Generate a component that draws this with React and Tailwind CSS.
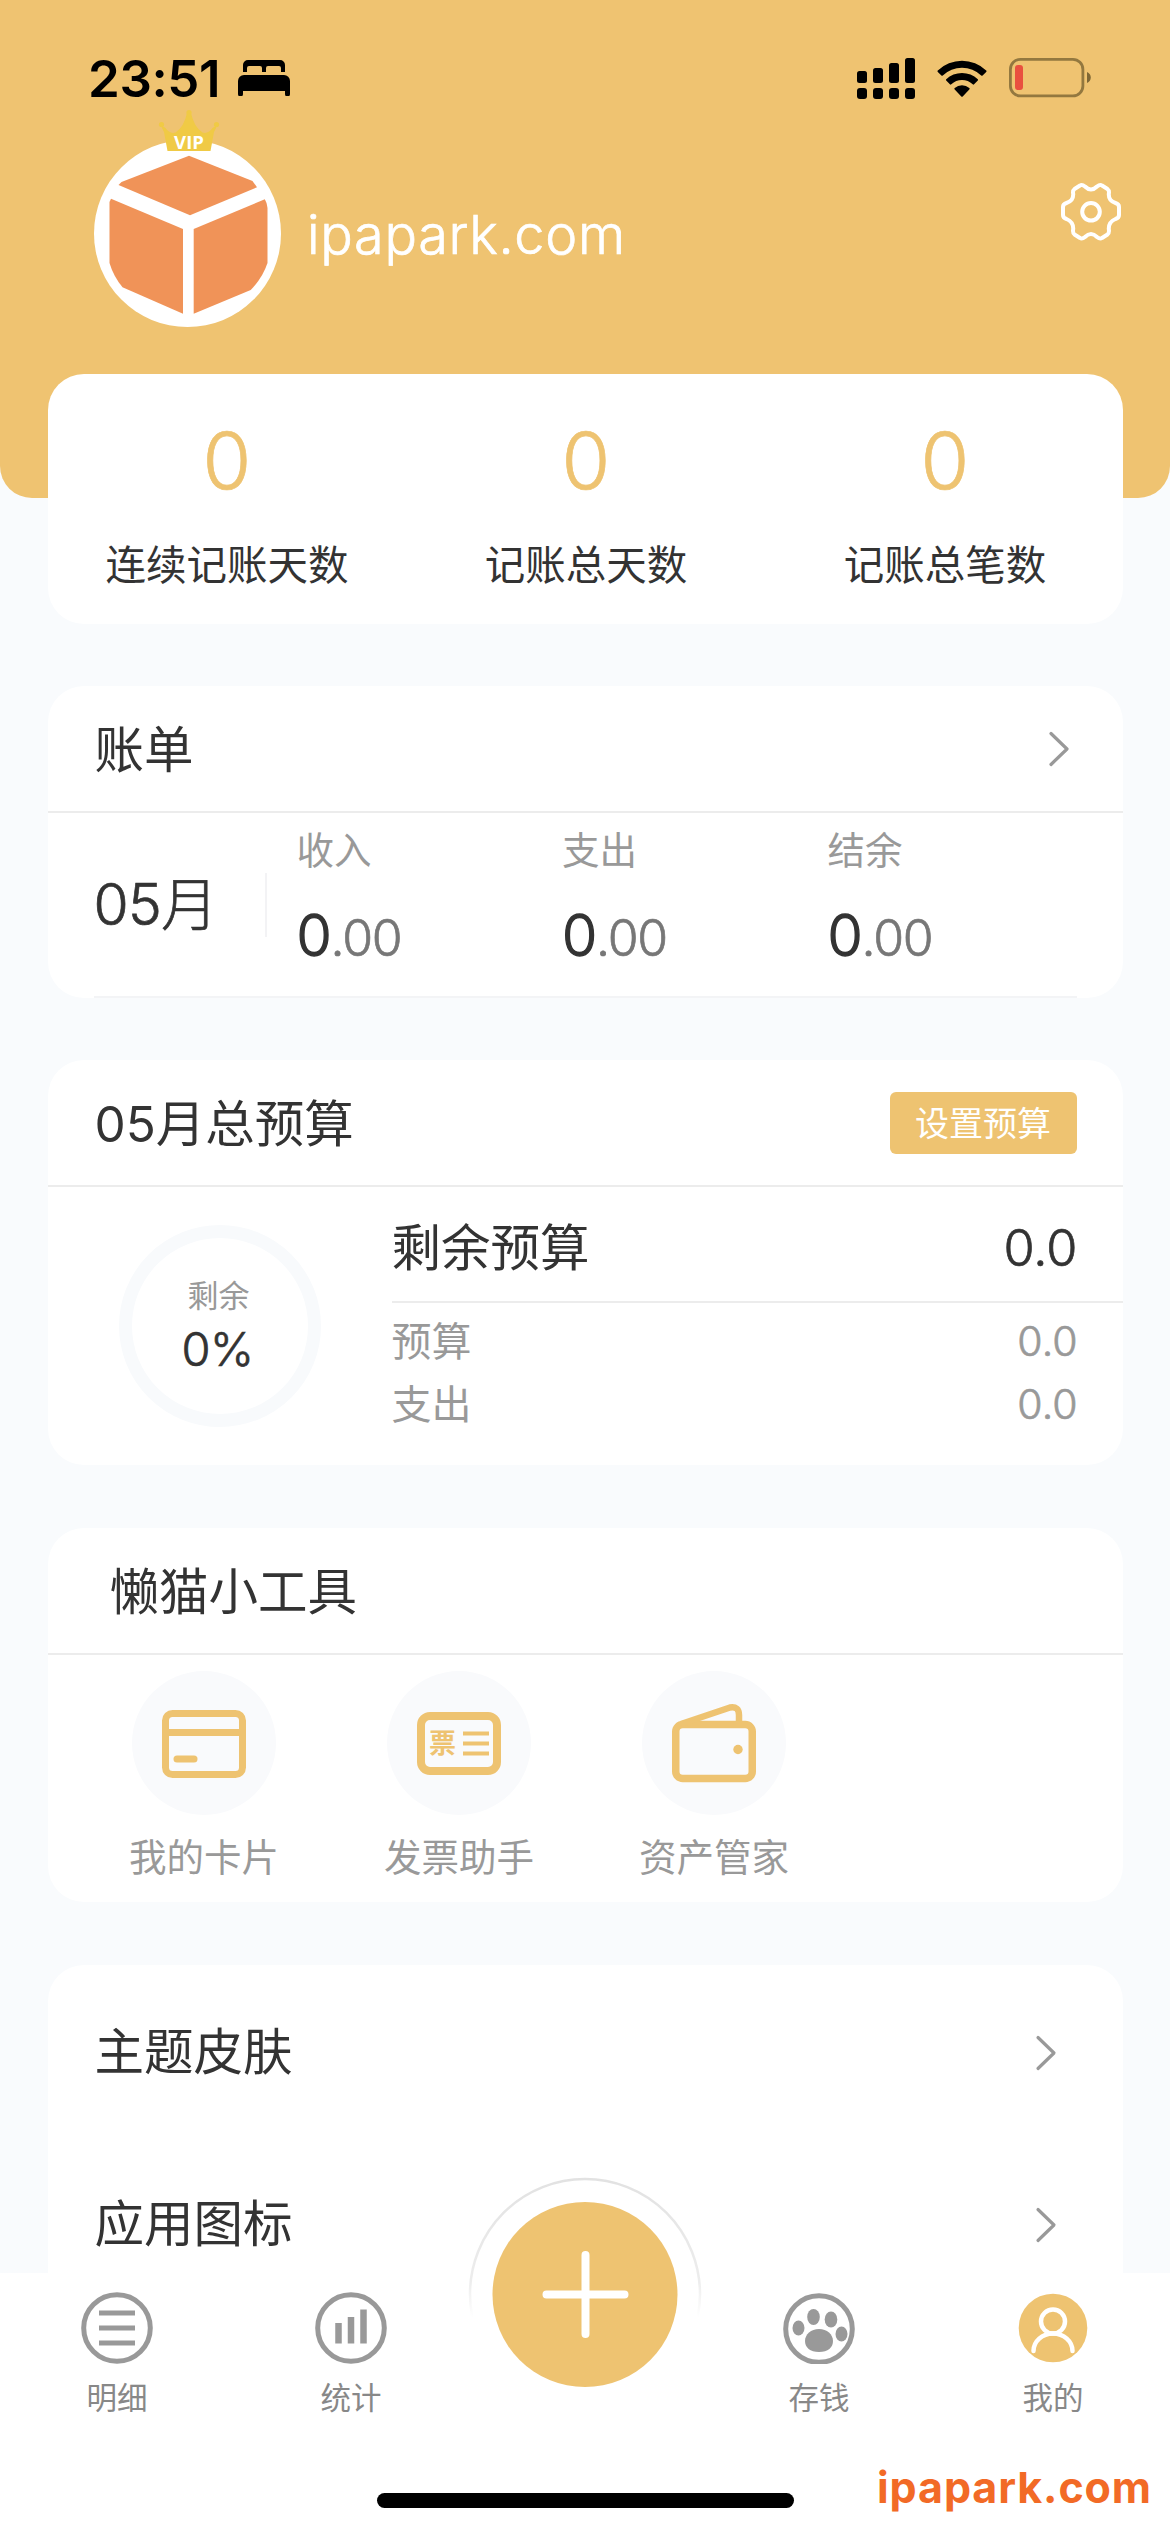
const FONT = "font-['Inter','Noto_Sans_CJK_SC',sans-serif]"

const STATS = [
  { label: '连续记账天数', value: 0 },
  { label: '记账总天数', value: 0 },
  { label: '记账总笔数', value: 0 },
]

const BILL = ['收入', '支出', '结余']

const TOOLS = [
  { label: '我的卡片', icon: CardIcon },
  { label: '发票助手', icon: InvoiceIcon },
  { label: '资产管家', icon: WalletIcon },
]

const MENU = ['主题皮肤', '应用图标']

function BedIcon() {
  return (
    <svg width="52" height="36" viewBox="0 0 52 36">
      <path d="M5 12V5a5 5 0 0 1 5-5h32a5 5 0 0 1 5 5v7h-4V8a2 2 0 0 0-2-2H30a2 2 0 0 0-2 2v4h-4V8a2 2 0 0 0-2-2H11a2 2 0 0 0-2 2v4z" />
      <path d="M0 21a6 6 0 0 1 6-6h40a6 6 0 0 1 6 6v13a2 2 0 0 1-5 0v-3H5v3a2 2 0 0 1-5 0z" />
    </svg>
  )
}

function SignalIcon() {
  return (
    <svg width="58" height="41" viewBox="0 0 58 41">
      <rect x="0" y="13" width="10" height="12" rx="2.5" />
      <rect x="16" y="10" width="10" height="15" rx="2.5" />
      <rect x="32" y="5" width="10" height="20" rx="2.5" />
      <rect x="48" y="0" width="10" height="25" rx="2.5" />
      <rect x="0" y="30" width="10" height="11" rx="3" />
      <rect x="16" y="30" width="10" height="11" rx="3" />
      <rect x="32" y="30" width="10" height="11" rx="3" />
      <rect x="48" y="30" width="10" height="11" rx="3" />
    </svg>
  )
}

function WifiIcon() {
  return (
    <svg width="50" height="37" viewBox="0 0 50 37">
      <path d="M0.8 10.5a35 35 0 0 1 48.4 0a1 1 0 0 1 0 1.400l-3.600 3.600a1 1 0 0 1-1.400 0a27.800 27.800 0 0 0-38.400 0a1 1 0 0 1-1.400 0l-3.600-3.600a1 1 0 0 1 0-1.400z" />
      <path d="M9.200 19.200a23 23 0 0 1 31.600 0a1 1 0 0 1 0 1.400l-3.700 3.700a1 1 0 0 1-1.400 0a15.600 15.600 0 0 0-21.400 0a1 1 0 0 1-1.400 0l-3.700-3.700a1 1 0 0 1 0-1.400z" />
      <path d="M17.700 28a11 11 0 0 1 14.600 0a1 1 0 0 1 0 1.400l-6.600 7a1 1 0 0 1-1.400 0l-6.600-7a1 1 0 0 1 0-1.400z" />
    </svg>
  )
}

function BatteryIcon() {
  return (
    <svg width="82" height="40" viewBox="0 0 82 40">
      <rect x="1.400" y="1.400" width="72.500" height="36.500" rx="10" fill="none" stroke="#93783f" strokeWidth="2.800" />
      <path d="M78 14c5 2 5 9 0 11z" fill="#7f6735" />
      <rect x="6" y="7" width="8" height="25" rx="3" fill="#e9503f" />
    </svg>
  )
}

function Avatar() {
  return (
    <div className="relative h-[187px] w-[187px]">
      <svg width="187" height="187" viewBox="94 140 187 187">
        <circle cx="187.500" cy="233.500" r="93.500" fill="#fff" />
        <g fill="#f09358">
          <path d="M118.500 185l3-3L189 155.700l63.500 25.300l4.500 6.300L190 215.300z" />
          <path d="M111 198.700L183 229v84.700l-60.500-26.400q-9-11-13-24.300v-61z" />
          <path d="M193.700 229l71.100-29.700q2.500 4 2.700 8.700v55q-5 15-16.800 27l-57 23.700z" />
        </g>
      </svg>
      <div className="absolute -top-8 left-[63px] h-[43px] w-[64px]">
        <svg className="absolute inset-0" width="64" height="43" viewBox="0 0 64 43" fill="#f0ca45">
          <path d="M10.500 43L7 24L4 18L8 19.500Q13 26.500 18.500 24.500Q27 19 30 5h4Q37 19 45.500 24.500Q51 26.500 56 19.500L60 18L57 24L53.500 43z" />
          <circle cx="32" cy="4.500" r="2.600" />
          <circle cx="4.500" cy="16.500" r="2.600" />
          <circle cx="59.500" cy="16.500" r="2.600" />
        </svg>
        <span className="absolute inset-x-0 bottom-0 text-center font-['Open_Sans'] text-[18.5px] leading-[18px] font-bold text-white">VIP</span>
      </div>
    </div>
  )
}

function GearIcon() {
  return (
    <svg width="62" height="60" viewBox="0 0 62 60" fill="none" stroke="#fff" strokeWidth="4" strokeLinejoin="round">
      <path d="M20 3.500Q22 2 25 4.500Q31 10.500 37 4.500Q40 2 42 3.500L47.500 7Q49.500 8.500 48.800 12Q48.500 19 55.500 21Q59 22 59 25V33Q59 36 55.500 37Q48.500 40 48.800 47Q49.500 51 47.500 52.500L42 56Q40 57.500 37 55Q31 49 25 55Q22 57.500 20 56L14.500 52.500Q12.500 51 13.200 47Q13.500 40 6.500 37Q3 36 3 33V25Q3 22 6.500 21Q13.500 19 13.200 12Q12.500 8.500 14.500 7Z" />
      <circle cx="31" cy="29.800" r="8.800" />
    </svg>
  )
}

function Chevron() {
  return (
    <svg width="22" height="38" viewBox="0 0 22 38" fill="none" stroke="#999" strokeWidth="3.200" strokeLinecap="round" strokeLinejoin="round">
      <path d="M3 3.500L19 19L3 34.500" />
    </svg>
  )
}

function CardIcon() {
  return (
    <svg width="84" height="84" viewBox="0 0 84 84" fill="none" stroke="#eec371" strokeWidth="7">
      <rect x="3.500" y="12.500" width="77" height="61" rx="7" />
      <path d="M4 31.500h76" />
      <path d="M15 58h17" strokeLinecap="round" />
    </svg>
  )
}

function InvoiceIcon() {
  return (
    <svg width="84" height="84" viewBox="0 0 84 84">
      <rect x="4" y="15" width="76" height="55" rx="9" fill="none" stroke="#eec371" strokeWidth="8" />
      <text x="12" y="52" fontSize="27" fontWeight="700" fill="#eec371" fontFamily="Noto Sans CJK SC">票</text>
      <path d="M46 32.500h26M46 42.500h26M46 52.500h26" stroke="#eec371" strokeWidth="4" />
    </svg>
  )
}

function WalletIcon() {
  return (
    <svg width="84" height="84" viewBox="0 0 84 84" fill="none" stroke="#eec371" strokeWidth="7.5">
      <rect x="3.750" y="23.500" width="76.500" height="54" rx="7" />
      <path d="M9 23L58 6.500Q67 5 67 14V22" strokeLinejoin="round" strokeWidth="6.500" />
      <circle cx="66" cy="48.500" r="4.700" fill="#eec371" stroke="none" />
    </svg>
  )
}

function ListTabIcon() {
  return (
    <svg width="72" height="72" viewBox="0 0 72 72" fill="none" stroke="#999" strokeWidth="5">
      <circle cx="36" cy="36" r="33.300" />
      <path d="M18 21h36M18 36h36M18 51h36" />
    </svg>
  )
}

function ChartTabIcon() {
  return (
    <svg width="72" height="72" viewBox="0 0 72 72" fill="none" stroke="#999">
      <circle cx="36" cy="36" r="33.300" strokeWidth="5" />
      <path d="M23.500 31v20.500M36 25v26.500M48.500 17.500v34" strokeWidth="6.500" />
    </svg>
  )
}

function PawTabIcon() {
  return (
    <svg width="72" height="72" viewBox="0 0 72 72" fill="#999">
      <circle cx="36" cy="37" r="33.300" fill="none" stroke="#999" strokeWidth="5" />
      <ellipse cx="15.500" cy="36" rx="6" ry="7.500" />
      <ellipse cx="30.500" cy="25" rx="6.300" ry="8" />
      <ellipse cx="48" cy="27.500" rx="6.300" ry="8" />
      <ellipse cx="58.500" cy="42" rx="6" ry="7.500" />
      <path d="M36 37c8 0 14 5.500 14 12s-5 11-14 11s-14-4.500-14-11s6-12 14-12z" />
    </svg>
  )
}

function MineTabIcon() {
  return (
    <svg width="72" height="72" viewBox="0 0 72 72" fill="none">
      <circle cx="36" cy="36" r="34.300" fill="#eec371" />
      <g stroke="#fff" strokeWidth="4.500" strokeLinecap="round">
        <circle cx="36" cy="29.500" r="12" />
        <path d="M16.500 59a19.500 17.500 0 0 1 39 0" />
      </g>
    </svg>
  )
}

function Card({ className = '', children }) {
  return <section className={`w-[1075px] overflow-hidden rounded-[36px] bg-white ${className}`}>{children}</section>
}

function CardHeader({ title, className = 'pl-[47px]', children }) {
  return (
    <div className={`flex h-[127px] items-center justify-between border-b-2 border-[#ececec] pr-[46px] text-[49.5px] ${className}`}>
      <h2 className="pt-1">{title}</h2>
      {children}
    </div>
  )
}

function TabItem({ label, icon: Icon }) {
  return (
    <div className="flex w-[234px] flex-col items-center pt-[19px]">
      <Icon />
      <span className="mt-[18px] text-[30.5px] leading-[32px] text-[#888]">{label}</span>
    </div>
  )
}

function StatusBar() {
  return (
    <div className="flex h-[108px] items-end justify-between pr-[79px] pl-[88px]">
      <div className="flex h-[60px] items-center gap-[18px]">
        <span className="text-[51px] font-semibold tracking-[-0.4px]">23:51</span>
        <BedIcon />
      </div>
      <div className="flex h-[60px] items-center gap-[22px]">
        <SignalIcon />
        <WifiIcon />
        <BatteryIcon />
      </div>
    </div>
  )
}

// light digits with a hairline stroke, between Inter Light and Regular
function Num({ className = '', children }) {
  return <span className={`font-light [-webkit-text-stroke:0.7px_currentColor] ${className}`}>{children}</span>
}

export default function App() {
  return (
    <div className={`flex h-[2532px] w-[1170px] flex-col overflow-hidden bg-white leading-none text-[#333] ${FONT}`}>
      <main className="flex h-[2273px] shrink-0 flex-col items-center overflow-hidden bg-[#f9fbfd]">
        <header className="h-[498px] w-full shrink-0 rounded-b-[32px] bg-[#efc371] text-black">
          <StatusBar />
          <div className="flex items-start justify-between pt-8 pr-[48px] pl-[94px]">
            <div className="flex items-center gap-[26px]">
              <Avatar />
              <Num className="pt-[2px] text-[54px] tracking-[0.7px] text-white">ipapark.com</Num>
            </div>
            <div className="pt-[42px]">
              <GearIcon />
            </div>
          </div>
        </header>

        <Card className="-mt-[124px] flex h-[250px] shrink-0">
          {STATS.map((s) => (
            <div key={s.label} className="flex w-[359px] shrink-0 flex-col items-center pt-[47px]">
              <Num className="text-[79px] text-[#eec371]">{s.value}</Num>
              <span className="mt-[46px] text-[40.5px] leading-10">{s.label}</span>
            </div>
          ))}
        </Card>

        <Card className="mt-[62px] h-[312px] shrink-0">
          <CardHeader title="账单">
            <div className="pr-[7px]">
              <Chevron />
            </div>
          </CardHeader>
          <div className="mx-[46px] flex h-[185px] items-center border-b-2 border-[#f3f4f6]">
            <Num className="w-[171px] shrink-0 text-[57px] tracking-[-0.7px]">05月</Num>
            <div className="h-[64px] w-[2px] shrink-0 bg-[#f3f3f5]" />
            <div className="flex pb-[13px] pl-[30px]">
              {BILL.map((label) => (
                <div key={label} className="w-[265.5px] shrink-0">
                  <div className="text-[37.5px] text-[#999]">{label}</div>
                  <div className="mt-[38px] text-[57px] tracking-[-1.2px]">
                    <span className="font-light [-webkit-text-stroke:1.3px_currentColor]">0</span>
                    <Num className="text-[50px] text-[#777]">.00</Num>
                  </div>
                </div>
              ))}
            </div>
          </div>
        </Card>

        <Card className="mt-[62px] h-[405px] shrink-0">
          <CardHeader title="05月总预算">
            <button className="h-[62px] w-[187px] rounded-md bg-[#eec371] pt-[2px] text-[34px] text-white">设置预算</button>
          </CardHeader>
          <div className="flex h-[278px]">
            <div className="flex w-[344px] items-center justify-center">
              <div className="flex h-[202px] w-[202px] flex-col items-center justify-center rounded-full border-[13px] border-[#f8fafc]">
                <span className="pr-[2px] text-[31px] text-[#999]">剩余</span>
                <Num className="mt-[14px] pr-[4px] text-[47px] tracking-[-0.5px]">0%</Num>
              </div>
            </div>
            <div className="flex-1">
              <div className="flex h-[116px] items-center justify-between border-b-2 border-[#ececec] pt-[9px] pr-[45px] text-[49.5px]">
                <span>剩余预算</span>
                <Num className="text-[50.5px]">0.0</Num>
              </div>
              <div className="flex flex-col pt-[7px] pr-[45px] text-[40px] text-[#999]">
                <div className="flex h-[63px] items-center justify-between">
                  <span>预算</span>
                  <Num className="text-[41px]">0.0</Num>
                </div>
                <div className="flex h-[63px] items-center justify-between">
                  <span>支出</span>
                  <Num className="text-[41px]">0.0</Num>
                </div>
              </div>
            </div>
          </div>
        </Card>

        <Card className="mt-[63px] h-[374px] shrink-0">
          <CardHeader title="懒猫小工具" className="pl-[62px]" />
          <div className="flex pt-4 pl-[29px]">
            {TOOLS.map(({ label, icon: Icon }) => (
              <div key={label} className="flex w-[255px] flex-col items-center">
                <div className="flex h-[144px] w-[144px] items-center justify-center rounded-full bg-[#f9fafc]">
                  <Icon />
                </div>
                <span className="mt-[24px] text-[37.5px] text-[#999]">{label}</span>
              </div>
            ))}
          </div>
        </Card>

        <Card className="mt-[63px] h-[344px] shrink-0">
          {MENU.map((label) => (
            <div key={label} className="flex h-[172px] items-center justify-between pt-[3px] pr-[66px] pl-[47px] text-[49.5px]">
              <span>{label}</span>
              <Chevron />
            </div>
          ))}
        </Card>
      </main>

      <nav className="relative flex h-[259px] shrink-0 bg-white">
        <TabItem label="明细" icon={ListTabIcon} />
        <TabItem label="统计" icon={ChartTabIcon} />
        <div className="w-[234px]" />
        <TabItem label="存钱" icon={PawTabIcon} />
        <TabItem label="我的" icon={MineTabIcon} />

        {/* add button raised above the bar */}
        <svg className="absolute -top-[97px] left-[467px]" width="236" height="236" viewBox="0 0 236 236">
          <defs>
            <linearGradient id="halo" x1="0" y1="0" x2="0" y2="1">
              <stop offset="0" stopColor="#e2e2e2" />
              <stop offset="0.450" stopColor="#ededed" />
              <stop offset="0.600" stopColor="#fff" />
            </linearGradient>
          </defs>
          <circle cx="118" cy="118" r="115" fill="#fff" stroke="url(#halo)" strokeWidth="2.500" />
          <circle cx="118" cy="118.500" r="92.500" fill="#eec371" />
          <path d="M118.500 79v79M79.500 118.500h78" stroke="#fff" strokeWidth="8" strokeLinecap="round" />
        </svg>
        <div className="absolute bottom-6 left-[377px] h-[15px] w-[417px] rounded-full bg-black" />
        <span className="absolute right-[18px] bottom-[23px] text-[43px] font-bold tracking-[0.9px] text-[#f26a26]">ipapark.com</span>
      </nav>
    </div>
  )
}
